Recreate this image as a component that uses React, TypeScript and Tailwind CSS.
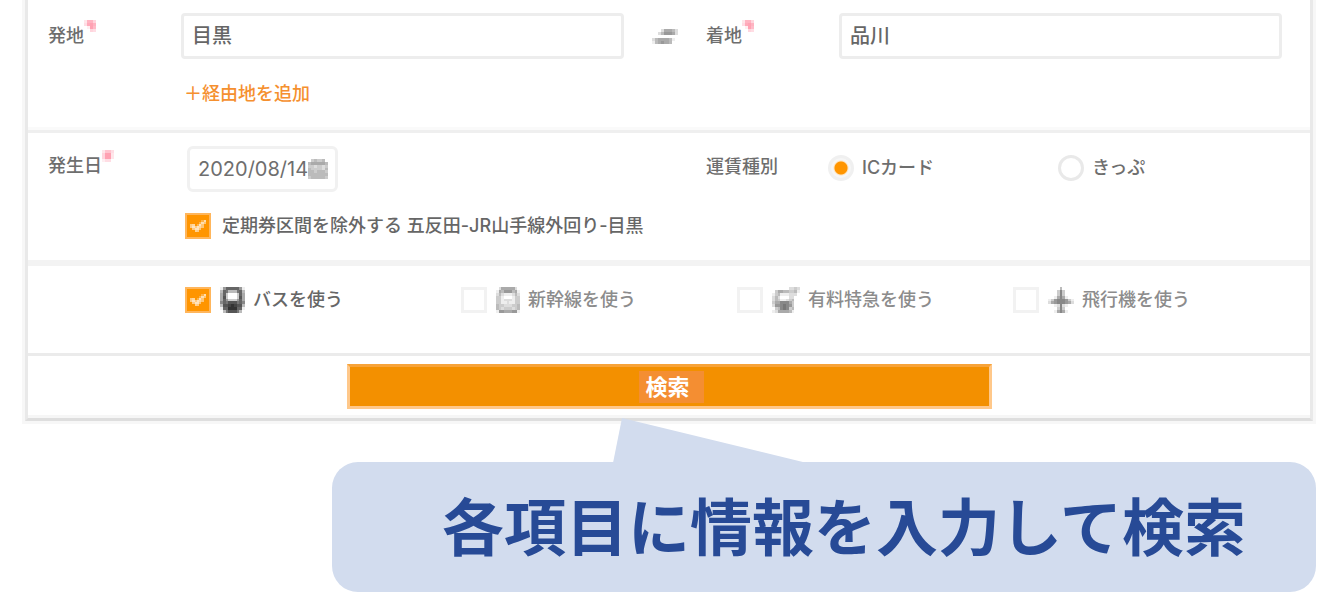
import React from "react";

type PixelIconProps = { rows: string[]; className: string };

/* Each character is a hex shade: 0 is solid ink, f is clear. */
function PixelIcon({ rows, className }: PixelIconProps) {
  const cols = rows[0].length;
  return (
    <svg
      viewBox={`0 0 ${cols} ${rows.length}`}
      preserveAspectRatio="none"
      className={className}
      shapeRendering="crispEdges"
      aria-hidden="true"
    >
      {rows.flatMap((row, y) =>
        row.split("").map((shade, x) => (
          <rect
            key={`${x}-${y}`}
            x={x}
            y={y}
            width="1"
            height="1"
            fill="currentColor"
            opacity={1 - parseInt(shade, 16) / 15}
          />
        )),
      )}
    </svg>
  );
}

const BUS = [
  "e9666669e",
  "b67bbb76b",
  "a6cfffc6a",
  "a5cfffc5a",
  "a69ccc96a",
  "867555768",
  "b5543455b",
  "e6633366e",
  "fb75557bf",
];
const SHINKANSEN = [
  "fdaaaaadf",
  "eab999bae",
  "dbdeeedbd",
  "ccefffecc",
  "ccedddecc",
  "cceedeecc",
  "bccdddccb",
  "bcdcccdcb",
  "e99aaa99e",
];
const EXPRESS = [
  "ffffffddcd",
  "fcaabbccbe",
  "ecbeeedddf",
  "dbdfffddff",
  "dbceedcbff",
  "caa888acff",
  "d998789cff",
  "fcb878cbff",
  "edaaaabeff",
];
const PLANE = [
  "ffffbffff",
  "fffc8cfff",
  "fffc8cfff",
  "ffea8aeff",
  "ec98889ce",
  "da98889ad",
  "ffed8deff",
  "fffc8cfff",
  "ffea8aeff",
];
const SWAP = ["fffdaaabd", "ffdb999ad", "fffffffff", "dbaaaabef", "eba9aabff"];
const CALENDAR = ["fcbccbf", "baaaaab", "ccdccdc", "bccccdb", "bbcbbbc", "bbbbbbb", "cbbbbbc"];
const MARK = ["c66a", "b546", "fd47", "ffab"];
const MARK_SQUARE = ["c88b", "a44c", "a44c", "dbbf"];
const CHECK = ["fffffa3", "ffffa37", "64fa27f", "626247f", "f6227ff", "ff56fff"];

function FieldLabel({ text, htmlFor, mark }: { text: string; htmlFor: string; mark?: string[] }) {
  return (
    <label htmlFor={htmlFor} className="flex items-start leading-6">
      {text}
      {mark && <PixelIcon rows={mark} className="-mt-1 size-3 text-[#ff8098]" />}
    </label>
  );
}

function TickBox({ id, checked }: { id: string; checked?: boolean }) {
  return (
    <span className="relative flex shrink-0">
      <input
        id={id}
        type="checkbox"
        defaultChecked={checked}
        className="peer size-[26px] appearance-none border-3 border-[#f2f2f2] bg-white checked:border-2 checked:border-[#ffb65c] checked:bg-[#ff9500]"
      />
      <PixelIcon
        rows={CHECK}
        className="pointer-events-none absolute top-[7px] left-[5px] hidden h-3 w-4 text-[#fff0dc] peer-checked:block"
      />
    </span>
  );
}

function RadioDot({ id, checked }: { id: string; checked?: boolean }) {
  return (
    <input
      id={id}
      name="fare"
      type="radio"
      defaultChecked={checked}
      className="size-[26px] shrink-0 appearance-none rounded-full border-3 border-[#e9e9e9] bg-white checked:border-[#f0f0f0] checked:bg-[radial-gradient(circle,#ff9500_6px,#ffe3bd_7px,#f6f6f6_8px)]"
    />
  );
}

const transports = [
  { id: "bus", text: "バスを使う", rows: BUS, icon: "h-[26px] w-[25px] text-black", checked: true },
  { id: "shinkansen", text: "新幹線を使う", rows: SHINKANSEN, icon: "h-[26px] w-6 text-black", checked: false },
  { id: "express", text: "有料特急を使う", rows: EXPRESS, icon: "h-[26px] w-7 text-black", checked: false },
  { id: "plane", text: "飛行機を使う", rows: PLANE, icon: "h-[26px] w-[26px] text-black", checked: false },
];

const columns = "grid grid-cols-[133px_minmax(0,1fr)_82px_133px_minmax(0,1fr)] pr-7 pl-5";
const textField =
  "h-[46px] w-full rounded-[4px] border-3 border-[#ededed] bg-white px-2 pb-1 text-xl text-[#666] outline-none";

export default function App() {
  return (
    <main className="bg-white font-['Inter','Noto_Sans_CJK_JP',sans-serif] text-lg font-medium text-[#6e6e6e]">
      <form
        onSubmit={(e) => e.preventDefault()}
        className="mr-7 ml-[25px] border-x-3 border-b-3 border-x-[#e9e9e9] border-b-[#dedede] shadow-[0_0_0_3px_#f7f7f7]"
      >
        <section
          className={`${columns} border-b-3 border-[#efefef] pt-[13px] pb-[23px] shadow-[inset_0_-3px_#fafafa]`}
        >
          <div className="pt-[11px]">
            <FieldLabel text="発地" htmlFor="from" mark={MARK} />
          </div>
          <div>
            <input id="from" type="text" defaultValue="目黒" className={textField} />
            <button type="button" className="mt-[21px] ml-[3px] block leading-[27px] text-[#f5902f]">
              ＋経由地を追加
            </button>
          </div>
          <div className="pt-4 pl-7">
            <PixelIcon rows={SWAP} className="h-[15px] w-[26px] text-black" />
          </div>
          <div className="pt-[11px]">
            <FieldLabel text="着地" htmlFor="to" mark={MARK} />
          </div>
          <div>
            <input id="to" type="text" defaultValue="品川" className={textField} />
          </div>
        </section>

        <section className={`${columns} border-b-6 border-[#f3f3f3] pt-[13px] pb-[21px]`}>
          <div className="pt-2">
            <FieldLabel text="発生日" htmlFor="date" mark={MARK_SQUARE} />
          </div>
          <div>
            <div className="ml-[6px] flex h-[46px] w-[151px] items-center rounded-[6px] border-3 border-[#f1f1f1] pl-2">
              <input
                id="date"
                type="text"
                defaultValue="2020/08/14"
                className="w-[110px] bg-transparent text-xl font-normal outline-none"
              />
              <PixelIcon rows={CALENDAR} className="size-5 shrink-0 text-black" />
            </div>
            <div className="mt-[21px] ml-1 flex items-center gap-[11px] whitespace-nowrap">
              <TickBox id="pass" checked />
              <label htmlFor="pass" className="leading-6 text-[#666]">
                定期券区間を除外する 五反田-JR山手線外回り-目黒
              </label>
            </div>
          </div>
          <div />
          <div className="pt-[9px] leading-6">運賃種別</div>
          <div className="-ml-[11px] grid grid-cols-[230px_1fr] items-start pt-2">
            <div className="flex items-center gap-2">
              <RadioDot id="ic" checked />
              <label htmlFor="ic">ICカード</label>
            </div>
            <div className="flex items-center gap-2">
              <RadioDot id="ticket" />
              <label htmlFor="ticket">きっぷ</label>
            </div>
          </div>
        </section>

        <section className="grid grid-cols-4 border-b-3 border-[#ebebeb] pt-[21px] pr-[21px] pb-10 pl-[157px]">
          {transports.map((t) => (
            <div key={t.id} className="flex items-center gap-[9px]">
              <TickBox id={t.id} checked={t.checked} />
              <label
                htmlFor={t.id}
                className={`flex items-center gap-2 leading-6 ${t.checked ? "text-[#666]" : "text-[#8c8c8c]"}`}
              >
                <PixelIcon rows={t.rows} className={t.icon} />
                {t.text}
              </label>
            </div>
          ))}
        </section>

        <div className="flex justify-center pt-2 pb-[9px] shadow-[inset_0_-3px_#f6f6f6]">
          <button
            type="submit"
            className="flex h-[45px] w-[645px] items-center justify-center border-3 border-[#ffc88a] border-t-[#f7a339] bg-[#f39000] pl-[5px] text-[22px] font-bold text-white"
          >
            <span className="bg-[#f48e32] pr-[14px] pl-[6px] leading-8">検索</span>
          </button>
        </div>
      </form>

      <div className="relative mt-[41px] mr-[25px] ml-[332px] rounded-[26px] bg-[#d2dcee] pt-[22px] pb-[18px] pl-10 text-center text-[62px] leading-[90px] font-bold text-[#274a96]">
        <svg
          viewBox="0 0 194 45"
          className="absolute bottom-full left-[281px] -mb-px h-[45px] w-[194px]"
          aria-hidden="true"
        >
          <path d="M9 0 L0 45 H194 Z" fill="#d2dcee" />
        </svg>
        各項目に情報を入力して検索
      </div>
    </main>
  );
}
